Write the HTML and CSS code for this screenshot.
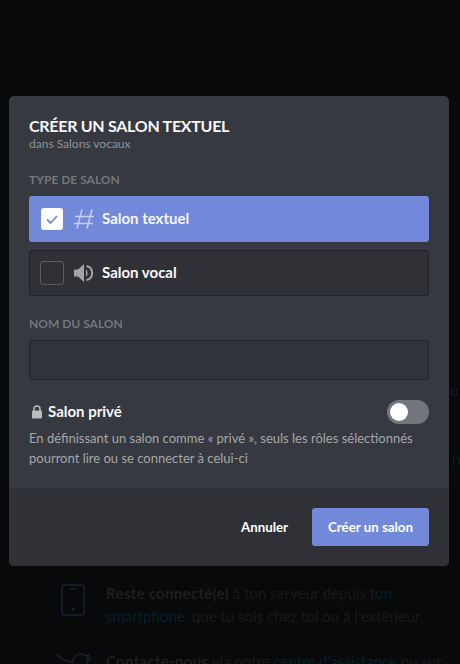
FILE: index.html
```html
<!DOCTYPE html>
<html lang="fr">
<head>
<meta charset="utf-8">
<title>Créer un salon textuel</title>
<link rel="stylesheet" href="styles.css">
</head>
<body>
<div class="backdrop">
  <span class="peek peek-text">u</span>
  <span class="peek peek-link">n</span>
  <div class="tip tip-phone">
    <svg class="tip-icon" width="24" height="32" viewBox="0 0 24 32"><rect x="1" y="1" width="22" height="30" rx="3" fill="none" stroke="#1a2030" stroke-width="1.600"/><path d="M9 5h6" stroke="#1a2030" stroke-width="1.400"/><circle cx="12" cy="25.500" r="1.700" fill="#1a2030"/></svg>
    <p><b>Reste connecté(e)</b> à ton serveur depuis <a>ton smartphone</a>, que tu sois chez toi ou à l'extérieur.</p>
  </div>
  <div class="tip tip-bird">
    <svg class="tip-icon" width="35" height="28" viewBox="0 0 35 28"><path d="M1 2c4 5 10 8 16 8 0-5 3-8 8-8 2 0 3 1 4 2l4-1-2 4 3 0-3 3c0 10-8 17-17 17" fill="none" stroke="#1a2030" stroke-width="1.600"/></svg>
    <p><b>Contacte-nous</b> via notre <a>centre d'assistance</a> ou sur</p>
  </div>
</div>
<main class="modal">
  <div class="modal-body">
    <h1 class="title">Créer un salon textuel</h1>
    <div class="subtitle">dans Salons vocaux</div>
    <h2 class="label label-type">Type de salon</h2>
    <div class="option option-on">
      <span class="check check-on"><svg width="14" height="14" viewBox="0 0 14 14"><path d="M2 7.500l3.500 3.500 6.500-7" fill="none" stroke="#7289da" stroke-width="1.800"/></svg></span>
      <svg class="option-icon" width="20" height="20" viewBox="0 0 20 20"><path d="M8 .5 3 19.500M18 .5 13 19.500M1 7.500h19M0 14.500h19" fill="none" stroke="#c7d0f0" stroke-width="1.500"/></svg>
      <span class="option-name">Salon textuel</span>
    </div>
    <div class="option option-off">
      <span class="check"></span>
      <svg class="option-icon" width="20" height="20" viewBox="0 0 20 20"><path d="M0 6.500h4L10 1v18l-6-5.500H0z" fill="#a3a5a8"/><path d="M12 6.500c2 .8 2 6.200 0 7z" fill="#a3a5a8"/><path d="M12.500 3c7.500 1.500 7.500 12.500 0 14" fill="none" stroke="#a3a5a8" stroke-width="2"/></svg>
      <span class="option-name">Salon vocal</span>
    </div>
    <h2 class="label label-name">Nom du salon</h2>
    <div class="input"></div>
    <div class="private-row">
      <svg class="lock" width="12" height="14" viewBox="0 0 12 14"><path d="M3 6.500V4a3 3 0 0 1 6 0v2.500" fill="none" stroke="#b9bbbe" stroke-width="1.500"/><rect x="1" y="5.500" width="10" height="8" rx="1" fill="#b9bbbe"/></svg>
      <span class="private-name">Salon privé</span>
      <span class="toggle"><span class="knob"></span></span>
    </div>
    <p class="hint">En définissant un salon comme « privé », seuls les rôles sélectionnés pourront lire ou se connecter à celui-ci</p>
  </div>
  <div class="modal-footer">
    <button class="cancel">Annuler</button>
    <button class="create">Créer un salon</button>
  </div>
</main>
</body>
</html>
```
FILE: styles.css
```css
* { box-sizing: border-box; }
html, body { margin: 0; height: 100%; }
body {
  width: 460px; height: 664px; overflow: hidden; position: relative;
  background: #08090a;
  font-family: Lato, "Noto Sans", sans-serif;
  color: #fff;
}
.backdrop { position: absolute; left: 0; top: 582px; width: 460px; height: 82px; }
.peek { position: absolute; font-size: 15px; line-height: 22px; }
.peek-text { left: 450px; top: -203px; color: #191a1b; }
.peek-link { left: 452px; top: -134px; color: #072029; }
.tip { display: flex; padding-left: 61px; color: #191a1b; font-size: 15px; line-height: 23px; }
.tip p { margin: 0; width: 345px; }
.tip a { color: #072029; }
.tip b { color: #1e1f20; letter-spacing: .3px; }
.tip-phone { gap: 21px; height: 68px; }
.tip-bird { padding-left: 56px; gap: 15px; height: 14px; overflow: hidden; }
.tip-icon { flex: none; margin-top: 2px; }
.modal {
  position: absolute; left: 9px; top: 96px; width: 440px; height: 470px;
  background: #36393f; border-radius: 5px; overflow: hidden;
  display: flex; flex-direction: column;
}
.modal-body { flex: 1; padding: 20px 20px 0; }
.title { margin: 0; font-size: 16px; line-height: 20px; font-weight: 700; letter-spacing: -.28px; text-transform: uppercase; color: #f6f6f7; }
.subtitle { font-size: 12px; line-height: 16px; color: #8e9297; }
.label { margin: 0; font-size: 12px; line-height: 16px; font-weight: 700; text-transform: uppercase; color: #72767d; }
.label-type { margin-top: 20px; }
.option { display: flex; align-items: center; height: 46px; margin-top: 8px; border-radius: 3px; padding-left: 11px; }
.option-on { background: #7289da; }
.option-off { background: #2f3136; border: 1px solid #202225; padding-left: 10px; }
.check { width: 24px; height: 24px; border: 1px solid #5c5e63; border-radius: 3px; display: flex; align-items: center; justify-content: center; flex: none; }
.check-on { width: 22px; height: 22px; margin: 0 1px; background: #fff; border: 0; }
.option-icon { margin-left: 10px; flex: none; }
.option-name { margin-left: 8px; padding-bottom: 2px; font-size: 15px; font-weight: 700; color: #f6f6f7; }
.label-name { margin-top: 20px; }
.input { height: 40px; margin-top: 8px; background: #303339; border: 1px solid #222428; border-radius: 3px; }
.private-row { display: flex; align-items: center; margin-top: 20px; height: 24px; }
.lock { margin-left: 2px; flex: none; }
.private-name { margin-left: 5px; padding-bottom: 2px; font-size: 15px; font-weight: 700; color: #f6f6f7; flex: 1; }
.toggle { width: 42px; height: 24px; border-radius: 12px; background: #72767d; padding: 3px; flex: none; }
.knob { display: block; width: 18px; height: 18px; border-radius: 50%; background: #fff; }
.hint { margin: 4px 0 0; font-size: 13px; line-height: 20px; color: #a5a7ab; }
.modal-footer { height: 78px; background: #2f3136; display: flex; align-items: flex-start; justify-content: flex-end; padding: 20px 20px 0 0; }
button { font-family: inherit; font-size: 13.300px; font-weight: 700; border: 0; height: 38px; color: #fff; border-radius: 3px; padding: 0; }
.cancel { background: none; width: 95px; }
.create { background: #7289da; width: 117px; }
```
